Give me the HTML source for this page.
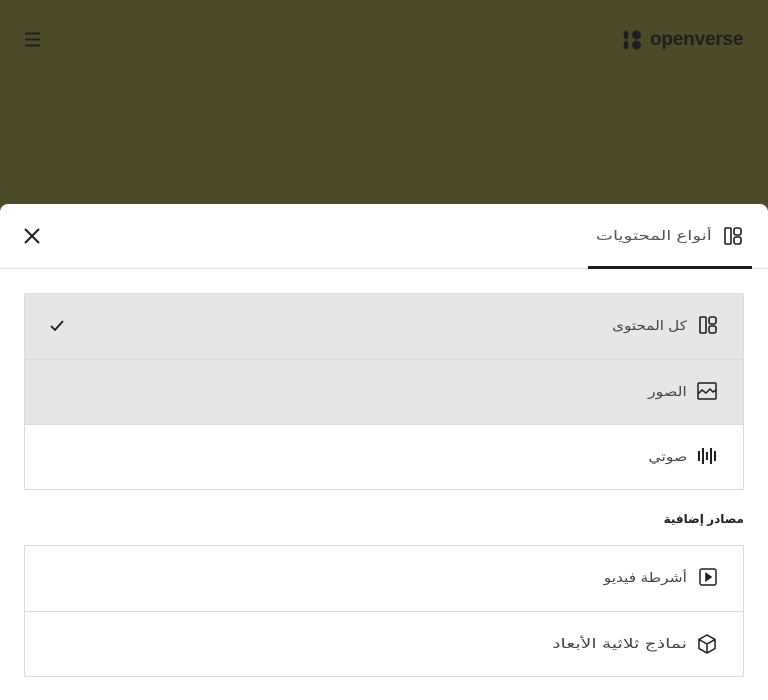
<!DOCTYPE html>
<html><head><meta charset="utf-8"><style>
*{box-sizing:border-box;margin:0;padding:0}
body{width:768px;height:700px;background:#4d4a28;font-family:"Liberation Sans","DejaVu Sans",sans-serif;position:relative;overflow:hidden;color:#30272e}
.top{position:absolute;top:0;left:0;width:768px;height:204px}
.sheet{position:absolute;top:204px;left:0;width:768px;height:496px;background:#fff;border-radius:8px 8px 0 0}
.tabbar{height:65px;border-bottom:1px solid #e0e0e0;position:relative}
.tab{position:absolute;right:16px;top:0;width:164px;height:65px;border-bottom:3px solid #1e1e1e}
.tab span{position:absolute;right:40px;top:24px;font-size:13px;color:#555;transform:scaleX(1.4);transform-origin:right center}
.list{position:absolute;left:24px;width:720px;border:1px solid #dcdcdc;border-radius:2px}
.row{height:65px;position:relative;border-top:1px solid #dcdcdc;background:#fff}
.row:first-child{border-top:none}
.row.g{background:#e6e6e6}
.row span{position:absolute;right:56px;top:24px;font-size:13px;color:#444;transform-origin:right center}
.row svg.ic{position:absolute;right:26px;top:22px}
h3{position:absolute;right:24px;top:308px;font-size:12px;font-weight:bold;color:#222}
</style></head><body>
<div class="top">
<svg style="position:absolute;left:24px;top:32px" width="17" height="16" viewBox="0 0 17 16" fill="none" stroke="#1e1e1e" stroke-width="2"><path d="M1 1.5h15M1 7.5h15M1 13.5h15"/></svg>
<svg style="position:absolute;left:623px;top:30px" width="20" height="20" viewBox="0 0 20 20" fill="#1e1e1e"><ellipse cx="3" cy="5" rx="2.5" ry="4.5"/><ellipse cx="3" cy="15" rx="2.5" ry="4.5"/><circle cx="13.5" cy="5" r="4.5"/><circle cx="13.5" cy="15" r="4.5"/></svg>
<div style="position:absolute;left:650px;top:29px;font-size:19px;font-weight:bold;color:#1e1e1e;letter-spacing:-0.2px">openverse</div>
</div>
<div class="sheet">
<div class="tabbar">
<svg style="position:absolute;left:23px;top:23px" width="18" height="18" viewBox="0 0 18 18" stroke="#1e1e1e" stroke-width="2"><path d="M2 2l14 14M16 2L2 16"/></svg>
<div class="tab"><span>أنواع المحتويات</span>
<svg style="position:absolute;right:10px;top:23px" width="18" height="18" viewBox="0 0 18 18" fill="none" stroke="#1e1e1e" stroke-width="1.6"><rect x="1" y="1" width="6" height="16" rx="1"/><rect x="10" y="1" width="7" height="7" rx="2"/><rect x="10" y="10" width="7" height="7" rx="2"/></svg></div>
</div>
<div class="list" style="top:89px">
<div class="row g"><span style="transform:scaleX(1.17)">كل المحتوى</span>
<svg style="position:absolute;left:24px;top:25px" width="16" height="14" viewBox="0 0 16 14" fill="none" stroke="#1e1e1e" stroke-width="1.8"><path d="M2 7l4 4L14 2"/></svg>
<svg class="ic" width="18" height="18" viewBox="0 0 18 18" fill="none" stroke="#1e1e1e" stroke-width="1.6"><rect x="1" y="1" width="6" height="16" rx="1"/><rect x="10" y="1" width="7" height="7" rx="2"/><rect x="10" y="10" width="7" height="7" rx="2"/></svg></div>
<div class="row g"><span style="transform:scaleX(1.22)">الصور</span>
<svg class="ic" width="20" height="18" viewBox="0 0 20 18" fill="none" stroke="#1e1e1e" stroke-width="1.5"><rect x="1" y="1" width="18" height="16" rx="1"/><path d="M1 12l4-4 4 3 4-4 3 3 3-2"/></svg></div>
<div class="row"><span style="transform:scaleX(1.2)">صوتي</span>
<svg class="ic" width="20" height="18" viewBox="0 0 20 18" stroke="#1e1e1e" stroke-width="2"><path d="M2 4v10M6 1v16M10 5v8M14 1v16M18 4v10"/></svg></div>
</div>
<h3>مصادر إضافية</h3>
<div class="list" style="top:341px">
<div class="row"><span style="transform:scaleX(1.19)">أشرطة فيديو</span>
<svg class="ic" width="18" height="18" viewBox="0 0 18 18" fill="none" stroke="#1e1e1e" stroke-width="1.5"><rect x="1" y="1" width="16" height="16" rx="2"/><path d="M7 5.5v7l5-3.5z" fill="#1e1e1e"/></svg></div>
<div class="row"><span style="transform:scaleX(1.45)">نماذج ثلاثية الأبعاد</span>
<svg class="ic" width="20" height="20" viewBox="0 0 20 20" fill="none" stroke="#1e1e1e" stroke-width="1.5"><path d="M10 1l8 4.5v9L10 19l-8-4.5v-9z"/><path d="M2 5.5l8 4.5 8-4.5M10 10v9"/></svg></div>
</div>
</div>
</body></html>
